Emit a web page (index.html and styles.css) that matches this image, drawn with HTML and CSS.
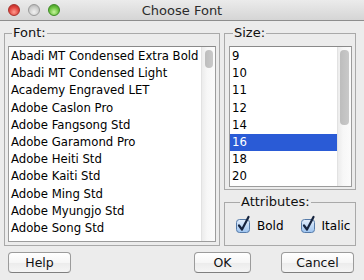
FILE: index.html
```html
<!DOCTYPE html>
<html lang="en">
<head>
    <title>Choose Font</title>
    <meta charset="UTF-8">
    <meta name="viewport" content="width=device-width, initial-scale=1.0">
    <link rel="stylesheet" href="styles.css">
</head>
<body>
<div class="window">
    <div class="titlebar">
        <div class="lights">
            <span class="light red"></span>
            <span class="light gray"></span>
            <span class="light green"></span>
        </div>
        <div class="title">Choose Font</div>
    </div>

    <div class="content">
        <fieldset class="group font-group">
            <legend>Font:</legend>
            <div class="list">
                <ul class="items">
                    <li>Abadi MT Condensed Extra Bold</li>
                    <li>Abadi MT Condensed Light</li>
                    <li>Academy Engraved LET</li>
                    <li>Adobe Caslon Pro</li>
                    <li>Adobe Fangsong Std</li>
                    <li>Adobe Garamond Pro</li>
                    <li>Adobe Heiti Std</li>
                    <li>Adobe Kaiti Std</li>
                    <li>Adobe Ming Std</li>
                    <li>Adobe Myungjo Std</li>
                    <li>Adobe Song Std</li>
                </ul>
                <div class="track font-track"><div class="thumb"></div></div>
            </div>
        </fieldset>

        <div class="side">
            <fieldset class="group size-group">
                <legend>Size:</legend>
                <div class="list">
                    <ul class="items">
                        <li>9</li>
                        <li>10</li>
                        <li>11</li>
                        <li>12</li>
                        <li>14</li>
                        <li class="selected">16</li>
                        <li>18</li>
                        <li>20</li>
                    </ul>
                    <div class="track size-track"><div class="thumb"></div></div>
                </div>
            </fieldset>

            <fieldset class="group attr-group">
                <legend>Attributes:</legend>
                <div class="checks">
                    <label class="check">
                        <svg class="box" width="16" height="17" viewBox="0 0 16 17">
                            <defs>
                                <linearGradient id="cb" x1="0" y1="0" x2="0" y2="1">
                                    <stop offset="0" stop-color="#e4effc"/>
                                    <stop offset="1" stop-color="#9cc3ef"/>
                                </linearGradient>
                            </defs>
                            <rect x="1.5" y="3.5" width="13" height="13" rx="3" fill="url(#cb)" stroke="#557aa8"/>
                            <path d="M4 9.5 L7 13.5 L13.5 1" fill="none" stroke="#16243f" stroke-width="2.2" stroke-linecap="round" stroke-linejoin="round"/>
                        </svg>
                        Bold
                    </label>
                    <label class="check">
                        <svg class="box" width="16" height="17" viewBox="0 0 16 17">
                            <rect x="1.5" y="3.5" width="13" height="13" rx="3" fill="url(#cb)" stroke="#557aa8"/>
                            <path d="M4 9.5 L7 13.5 L13.5 1" fill="none" stroke="#16243f" stroke-width="2.2" stroke-linecap="round" stroke-linejoin="round"/>
                        </svg>
                        Italic
                    </label>
                </div>
            </fieldset>
        </div>
    </div>

    <div class="footer">
        <button class="btn help">Help</button>
        <div class="actions">
            <button class="btn ok">OK</button>
            <button class="btn cancel">Cancel</button>
        </div>
    </div>
</div>
</body>
</html>
```

FILE: styles.css
```css
html, body {
    overflow: hidden;
}

body {
    margin: 0;
    padding: 0;
    font-family: "DejaVu Sans", sans-serif;
    color: #000;
}

.window {
    width: 364px;
    height: 280px;
    background-color: #ececec;
}

/* title bar */
.titlebar {
    height: 20px;
    display: grid;
    grid-template-columns: 1fr auto 1fr;
    align-items: center;
    background: linear-gradient(#ebebeb, #d5d5d5);
    border-bottom: 1px solid #8e8e8e;
}

.lights {
    display: flex;
    gap: 8px;
    padding-left: 8px;
}

.light {
    width: 12px;
    height: 12px;
    border-radius: 50%;
    box-sizing: border-box;
}

.light.red {
    background: radial-gradient(circle at 50% 70%, #ff9c8f, #e0443e 55%, #b0241f);
    border: 1px solid #a8322c;
}

.light.gray {
    background: radial-gradient(circle at 50% 70%, #f2f2f2, #cfcfcf 55%, #a9a9a9);
    border: 1px solid #9a9a9a;
}

.light.green {
    background: radial-gradient(circle at 50% 70%, #c8f59e, #69c13d 55%, #3c8c1e);
    border: 1px solid #3d8a24;
}

.title {
    font-size: 13px;
    color: #2b2b2b;
}

/* main area */
.content {
    display: flex;
    gap: 4px;
    padding: 4px 8px 0 4px;
}

.group {
    margin: 0;
    box-sizing: border-box;
    border: 1px solid #a9a9a9;
    min-width: 0;
}

.group legend {
    font-size: 13px;
    line-height: 16px;
    padding: 0 1px;
    margin-left: 4px;
    color: #111;
}

.font-group {
    width: 216px;
    height: 221px;
    padding: 5px 3px 3px 3px;
}

.side {
    display: flex;
    flex-direction: column;
    gap: 4px;
}

.size-group {
    width: 132px;
    height: 165px;
    padding: 5px 3px 3px 4px;
}

.attr-group {
    width: 132px;
    height: 52px;
    padding: 8px 3px 0 11px;
}

/* lists */
.list {
    display: flex;
    height: 100%;
    box-sizing: border-box;
    background-color: #fff;
    border: 1px solid #9c9c9c;
    border-top-color: #8a8a8a;
}

.items {
    flex: 1;
    list-style: none;
    margin: 0;
    padding: 1px 0 0 0;
    font-size: 11.7px;
    line-height: 17.2px;
    overflow: hidden;
    white-space: nowrap;
}

.items li {
    padding-left: 2px;
}

.items li.selected {
    background-color: #2a5bd6;
    color: #fff;
}

.track {
    width: 13px;
    background: linear-gradient(to right, #ececec, #f7f7f7 40%, #fbfbfb);
    border-left: 1px solid #e2e2e2;
    padding-top: 3px;
    display: flex;
    justify-content: center;
}

.thumb {
    width: 8px;
    border-radius: 4px;
    background: linear-gradient(to right, #bdbdbd, #c9c9c9);
}

.font-track .thumb {
    height: 18px;
}

.size-track .thumb {
    width: 9px;
    height: 75px;
}

/* checkboxes */
.checks {
    display: flex;
    gap: 17px;
}

.check {
    display: flex;
    align-items: center;
    gap: 6px;
    font-size: 12px;
    line-height: 17px;
}

.box {
    margin-top: -4px;
    margin-left: -1px;
    overflow: visible;
}

/* footer buttons */
.footer {
    display: flex;
    justify-content: space-between;
    padding: 6px 10px 0 8px;
}

.actions {
    display: flex;
    gap: 30px;
}

.btn {
    height: 21px;
    box-sizing: border-box;
    font-family: "DejaVu Sans", sans-serif;
    font-size: 12.5px;
    color: #111;
    background: linear-gradient(#ffffff, #f6f6f6 50%, #ececec 55%, #f5f5f5);
    border: 1px solid #9b9b9b;
    border-bottom-color: #7f7f7f;
    border-radius: 4px;
    padding: 0;
}

.help {
    width: 63px;
}

.ok {
    width: 57px;
}

.cancel {
    width: 73px;
}
```
